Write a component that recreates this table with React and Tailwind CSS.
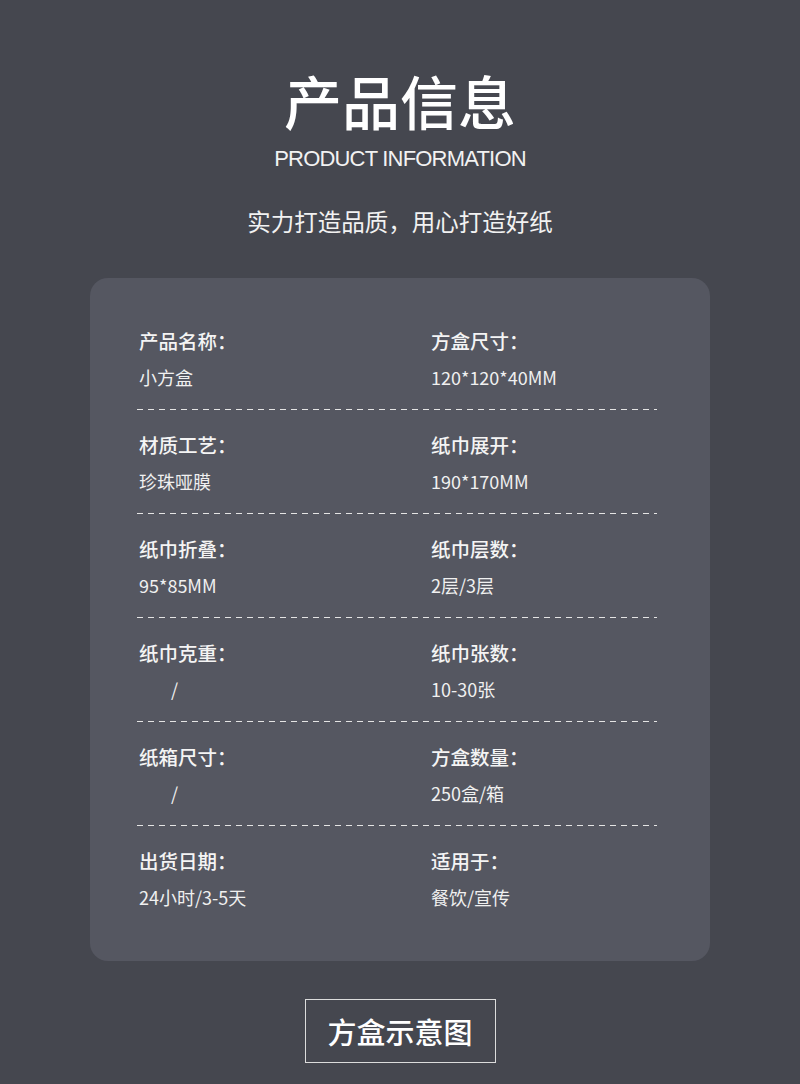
import React from "react";

const rows = [
  [["产品名称：", "小方盒"], ["方盒尺寸：", "120*120*40MM"]],
  [["材质工艺：", "珍珠哑膜"], ["纸巾展开：", "190*170MM"]],
  [["纸巾折叠：", "95*85MM"], ["纸巾层数：", "2层/3层"]],
  [["纸巾克重：", "/", true], ["纸巾张数：", "10-30张"]],
  [["纸箱尺寸：", "/", true], ["方盒数量：", "250盒/箱"]],
  [["出货日期：", "24小时/3-5天"], ["适用于：", "餐饮/宣传"]],
];

const cjk = { fontFamily: '"Noto Sans CJK SC", "Noto Sans", sans-serif' };

function Cell({ label, value, indent }) {
  return (
    <div className="flex flex-col">
      <div className="h-[24px] leading-[24px] text-[19.5px] font-medium text-[#f4f4f4] pl-[2px]">{label}</div>
      <div className={`mt-[12px] h-[24px] leading-[24px] text-[18px] text-[#f0f0f0] ${indent ? "pl-[34px]" : "pl-[2px]"}`}>{value}</div>
    </div>
  );
}

export default function App() {
  return (
    <div className="w-[800px] h-[1084px] bg-[#45474f] flex flex-col items-center overflow-hidden" style={cjk}>
      <h1 className="mt-[70px] text-[58px] leading-[60px] font-medium text-white">产品信息</h1>
      <div
        className="mt-[17px] text-[22px] leading-[24px] tracking-[-0.8px] text-[#f2f2f2]"
        style={{ fontFamily: '"Liberation Sans", Arial, sans-serif' }}
      >
        PRODUCT INFORMATION
      </div>
      <div className="mt-[35px] text-[23.5px] leading-[30px] text-[#f2f2f2]">实力打造品质，用心打造好纸</div>

      <div className="mt-[42px] w-[620px] bg-[#555761] rounded-[18px] pl-[47px] pr-[53px] pt-[51px] pb-[52px]">
        {rows.map((r, i) => (
          <div key={i}>
            {i > 0 && (
              <div className="mt-[20px] mb-[23px] h-px w-full bg-[repeating-linear-gradient(to_right,#e4e4e4_0px,#e4e4e4_6px,transparent_6px,transparent_11px)]" />
            )}
            <div className="grid grid-cols-[292px_1fr]">
              <Cell label={r[0][0]} value={r[0][1]} indent={r[0][2]} />
              <Cell label={r[1][0]} value={r[1][1]} indent={r[1][2]} />
            </div>
          </div>
        ))}
      </div>

      <div className="mt-[38px] w-[191px] h-[64px] border border-[#dcdcdc] flex items-center justify-center">
        <span className="text-[29px] font-medium text-white leading-none">方盒示意图</span>
      </div>
    </div>
  );
}
